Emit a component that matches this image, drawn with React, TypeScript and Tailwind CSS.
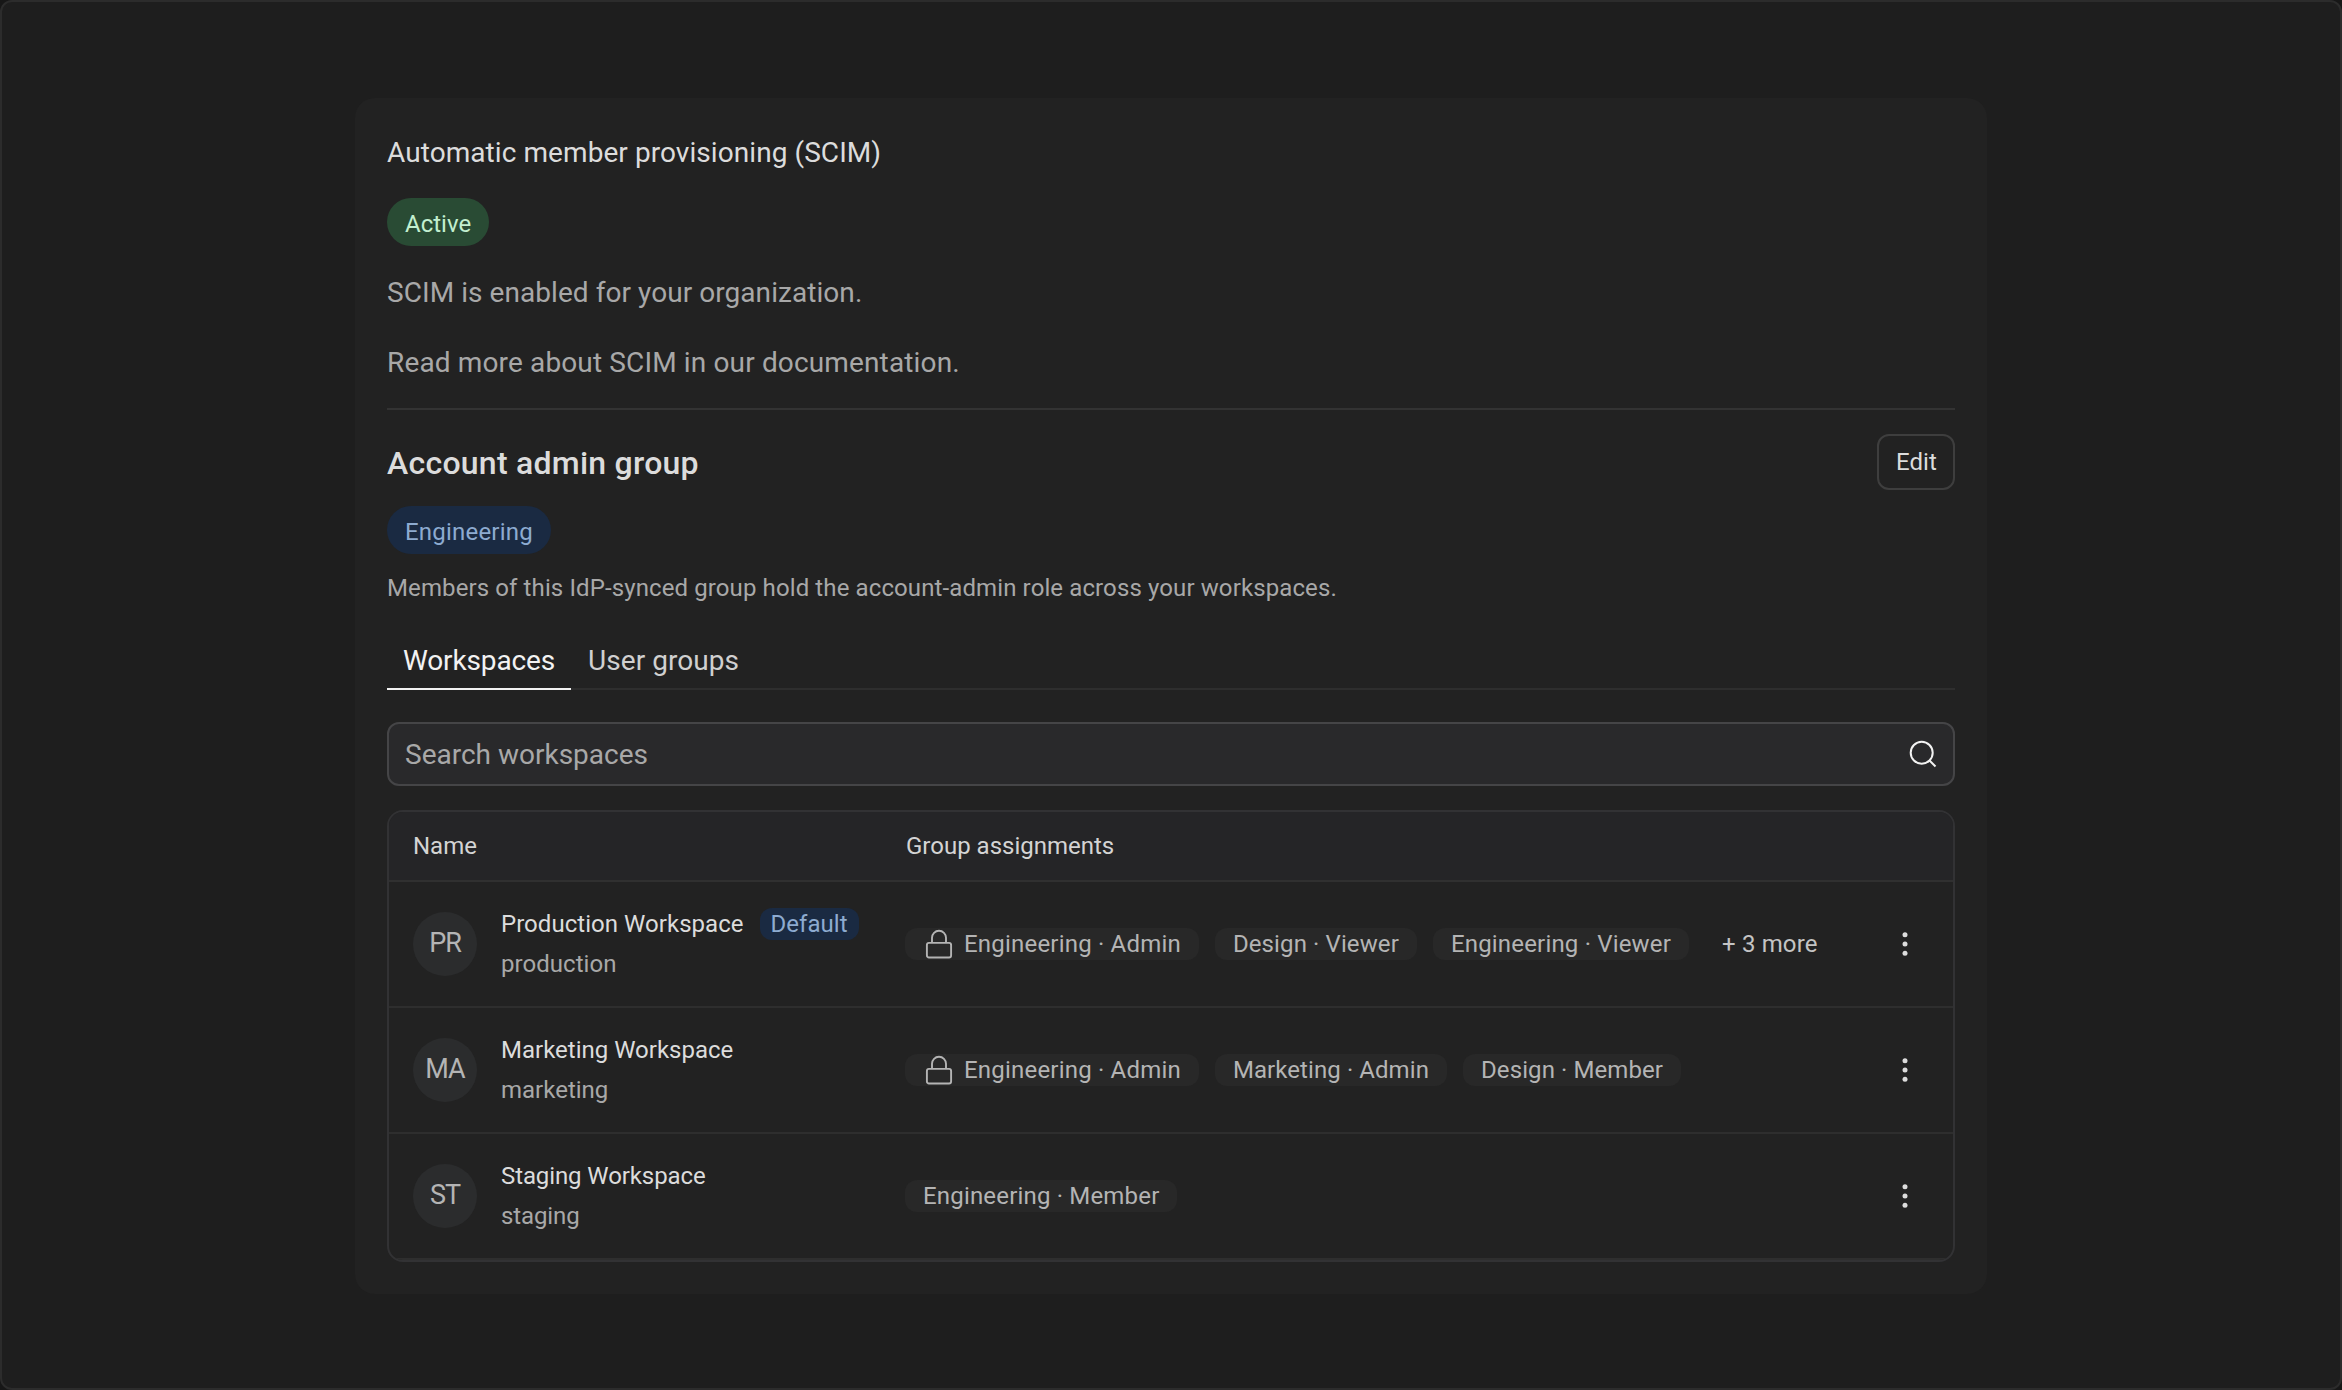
type Group = { label: string; locked?: boolean; tracking: string };
type Workspace = {
  initials: string;
  name: string;
  slug: string;
  tracking: string;
  isDefault?: boolean;
  groups: Group[];
  more?: number;
};

const workspaces: Workspace[] = [
  {
    initials: "PR",
    name: "Production Workspace",
    slug: "production",
    tracking: "tracking-[0.04px]",
    isDefault: true,
    groups: [
      { label: "Engineering · Admin", locked: true, tracking: "tracking-[0.2px]" },
      { label: "Design · Viewer", tracking: "tracking-[0.11px]" },
      { label: "Engineering · Viewer", tracking: "tracking-[0.18px]" },
    ],
    more: 3,
  },
  {
    initials: "MA",
    name: "Marketing Workspace",
    slug: "marketing",
    tracking: "tracking-normal",
    groups: [
      { label: "Engineering · Admin", locked: true, tracking: "tracking-[0.2px]" },
      { label: "Marketing · Admin", tracking: "tracking-[0.08px]" },
      { label: "Design · Member", tracking: "tracking-[0.09px]" },
    ],
  },
  {
    initials: "ST",
    name: "Staging Workspace",
    slug: "staging",
    tracking: "tracking-[-0.1px]",
    groups: [{ label: "Engineering · Member", tracking: "tracking-[0.18px]" }],
  },
];

function LockIcon() {
  return (
    <svg width="28" height="32" viewBox="0 0 28 32" fill="none" stroke="currentColor" strokeWidth="1.9" className="shrink-0">
      <rect x="1.9" y="14.9" width="24.2" height="14.6" rx="2" />
      <path d="M7 15V9.8a7 7 0 0 1 14 0V15" />
    </svg>
  );
}

function DotsIcon() {
  return (
    <svg width="8" height="32" viewBox="0 0 8 32" fill="currentColor">
      <circle cx="4" cy="6.7" r="2.5" />
      <circle cx="4" cy="16" r="2.5" />
      <circle cx="4" cy="25.3" r="2.5" />
    </svg>
  );
}

function SearchIcon() {
  return (
    <svg width="28" height="28" viewBox="0 0 28 28" fill="none" stroke="currentColor" strokeWidth="2">
      <circle cx="12.7" cy="12.7" r="11" />
      <path d="M20.5 20.5l6 6" />
    </svg>
  );
}

function GroupBadge({ group }: { group: Group }) {
  return (
    <span className="flex h-8 items-center rounded-xl bg-[#282828] px-[18px] text-2xl leading-8 text-[#b4b4b4]">
      {group.locked && (
        <span className="mr-[11px] ml-[2px]">
          <LockIcon />
        </span>
      )}
      <span className={group.tracking}>{group.label}</span>
    </span>
  );
}

function WorkspaceRow({ workspace }: { workspace: Workspace }) {
  return (
    <div className="grid h-[126px] grid-cols-[492px_1fr_auto] items-center border-b-2 border-[#2e2e2e] px-6">
      <div className="flex items-center gap-6">
        <span className="flex size-16 items-center justify-center rounded-full bg-[#2b2c2d] text-[27px] tracking-[-1px] text-[#b4b4b4]">
          {workspace.initials}
        </span>
        <div className={`leading-10 ${workspace.tracking}`}>
          <div className="flex items-center gap-4 text-[#dcdcdc]">
            {workspace.name}
            {workspace.isDefault && (
              <span className="flex h-8 items-center rounded-xl bg-[#1a2a42] px-[11px] text-[#8dabd0]">
                Default
              </span>
            )}
          </div>
          <div className="text-[#a8a8a8]">{workspace.slug}</div>
        </div>
      </div>
      <div className="flex items-center gap-4">
        {workspace.groups.map((group) => (
          <GroupBadge key={group.label} group={group} />
        ))}
        {workspace.more && (
          <button className="ml-[17px] tracking-[0.15px] text-[#c4c4c4]">{`+ ${workspace.more} more`}</button>
        )}
      </div>
      <button className="mr-5 text-[#dcdcdc]" aria-label="Actions">
        <DotsIcon />
      </button>
    </div>
  );
}

export default function App() {
  return (
    <div className="h-[1390px] bg-[#171717] font-['Roboto','Liberation_Sans',sans-serif]">
      <main className="flex h-full justify-center rounded-xl border-2 border-[#2c2c2c] bg-[#1e1e1e] pt-24">
        <section className="h-[1196px] w-[1632px] rounded-[20px] bg-[#222222] px-8 pt-[34px]">
          <h1 className="text-[28px] leading-[42px] tracking-[0.07px] text-[#dcdcdc]">
            Automatic member provisioning (SCIM)
          </h1>
          <div className="mt-6 flex">
            <span className="flex h-12 items-center rounded-full bg-[#294b34] px-[18px] pt-[3px] text-2xl text-[#c2efcf]">
              Active
            </span>
          </div>
          <p className="mt-[26px] text-[28px] leading-[42px] tracking-[0.06px] text-[#a8a8a8]">
            SCIM is enabled for your organization.
          </p>
          <p className="mt-7 text-[28px] leading-[42px] tracking-[0.14px] text-[#a8a8a8]">
            Read more about SCIM in our documentation.
          </p>

          {/* Account admin group */}
          <div className="mt-6 flex h-[82px] items-end justify-between border-t-2 border-[#333333]">
            <h2 className="pb-1 text-[32px] leading-[46px] font-medium tracking-[0.25px] text-[#dcdcdc]">
              Account admin group
            </h2>
            <button className="flex h-14 items-center rounded-xl border-2 border-[#3e3e3e] pr-4 pl-[17px] text-2xl tracking-[0.1px] text-[#dcdcdc]">
              Edit
            </button>
          </div>
          <div className="mt-4 flex">
            <span className="flex h-12 items-center rounded-full bg-[#1a2a42] px-[18px] pt-[3px] text-2xl tracking-[0.2px] text-[#8dabd0]">
              Engineering
            </span>
          </div>
          <p className="mt-[18px] text-2xl leading-8 tracking-[0.11px] text-[#a8a8a8]">
            Members of this IdP-synced group hold the account-admin role across your workspaces.
          </p>

          {/* Tabs */}
          <nav className="mt-7 flex h-[58px] border-b-2 border-[#2e2e2e] text-[28px] leading-[58px]">
            <button className="h-[58px] border-b-2 border-[#f2f2f2] px-4 tracking-[-0.14px] text-[#f2f2f2]">
              Workspaces
            </button>
            <button className="px-[17px] tracking-[0.05px] text-[#d0d0d0]">User groups</button>
          </nav>

          <div className="mt-8 flex h-16 items-center justify-between rounded-xl border-2 border-[#454547] bg-[#29292b] px-4 text-[28px] text-[#a8a8a8]">
            <span className="pt-px">Search workspaces</span>
            <span className="text-[#f2f2f2]">
              <SearchIcon />
            </span>
          </div>

          {/* Workspaces table */}
          <div className="mt-6 overflow-hidden rounded-2xl border-2 border-[#323234] text-2xl">
            <div className="grid h-[70px] grid-cols-[492px_1fr] items-center border-b-2 border-[#303030] bg-[#252527] px-6 text-[#d4d4d4]">
              <span>Name</span>
              <span className="pl-px">Group assignments</span>
            </div>
            {workspaces.map((workspace) => (
              <WorkspaceRow key={workspace.slug} workspace={workspace} />
            ))}
          </div>
        </section>
      </main>
    </div>
  );
}
